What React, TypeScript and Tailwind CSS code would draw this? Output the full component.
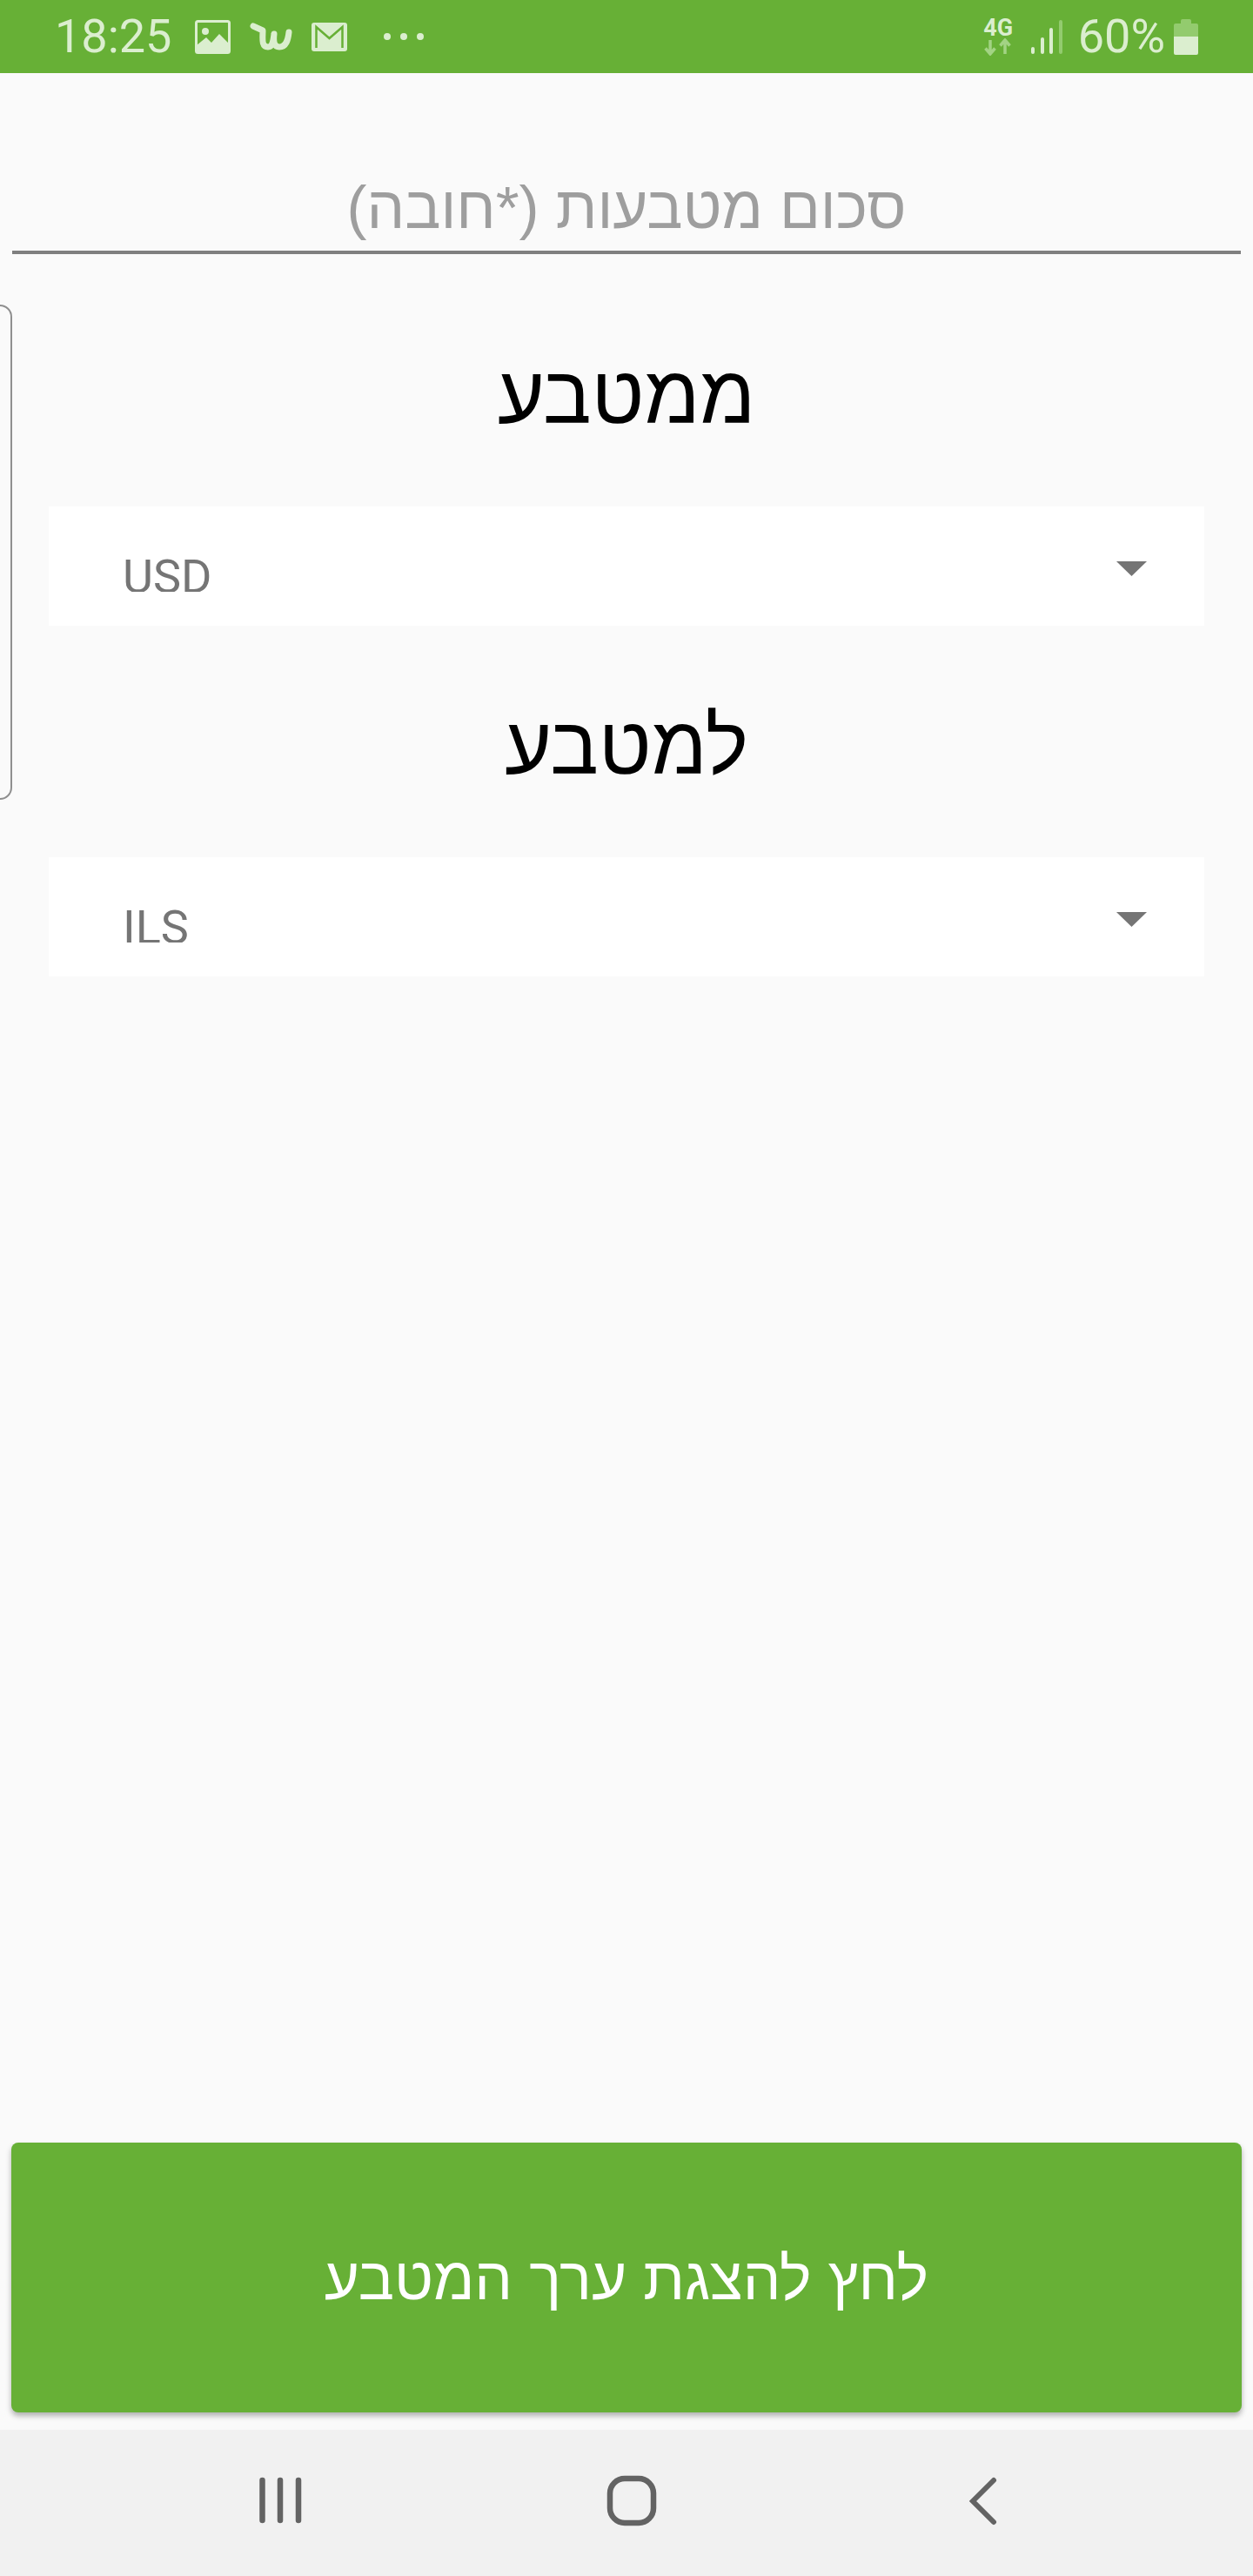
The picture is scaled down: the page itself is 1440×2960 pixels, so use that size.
const heb = "font-['Liberation_Sans',sans-serif]";

function ImageIcon() {
  return (
    <svg width="41" height="39" viewBox="0 0 41 39" className="block">
      <rect x="1.5" y="1.5" width="38" height="36" rx="2" fill="none" stroke="#dbeecf" strokeWidth="3" />
      <path d="M2 37V29L13 20L19 26L28 16L39 27V37Z" fill="#dbeecf" />
      <circle cx="12" cy="13" r="4" fill="#dbeecf" />
    </svg>
  );
}

function WishIcon() {
  return (
    <svg width="49" height="33" viewBox="0 0 49 33" className="block">
      <path d="M4 4L15 9C15 18 13 28 21 28C27 28 27 20 28 13C27 22 28 28 34 28C42 28 44 20 45 11" fill="none" stroke="#dbeecf" strokeWidth="7" strokeLinecap="round" strokeLinejoin="round" />
    </svg>
  );
}

function MailIcon() {
  return (
    <svg width="41" height="33" viewBox="0 0 41 33" className="block">
      <rect width="41" height="33" rx="3" fill="#dbeecf" />
      <path d="M5.5 29V5L20.5 18L35.5 5V29" fill="none" stroke="#67b036" strokeWidth="2.5" />
    </svg>
  );
}

function Dots() {
  return (
    <svg width="46" height="10" viewBox="0 0 46 10" className="block">
      <circle cx="4" cy="5" r="4" fill="#dbeecf" />
      <circle cx="23" cy="5" r="4" fill="#dbeecf" />
      <circle cx="42" cy="5" r="4" fill="#dbeecf" />
    </svg>
  );
}

function Arrows() {
  return (
    <svg width="32" height="20" viewBox="0 0 32 20" className="block">
      <path d="M7 2V17M1.5 11.5L7 18L12.5 11.5" fill="none" stroke="#a3d384" strokeWidth="3.5" />
      <path d="M24 18V2M18.5 8.5L24 2L29.5 8.5" fill="none" stroke="#a3d384" strokeWidth="3.5" />
    </svg>
  );
}

function Signal() {
  return (
    <div className="flex items-end gap-[6.5px] h-[39px]">
      <div className="w-[4px] h-[8px] rounded-full bg-[#dbeecf]" />
      <div className="w-[4px] h-[19px] rounded-full bg-[#dbeecf]" />
      <div className="w-[4px] h-[30px] rounded-full bg-[#dbeecf]" />
      <div className="w-[4px] h-[39px] rounded-full bg-[#93cb6e]" />
    </div>
  );
}

function Battery() {
  return (
    <div className="flex flex-col items-center w-[28px]">
      <div className="w-[12px] h-[5px] rounded-t-[2px] bg-[#93cb6e]" />
      <div className="w-[28px] h-[15px] rounded-t-[2px] bg-[#93cb6e]" />
      <div className="w-[28px] h-[21px] rounded-b-[2px] bg-[#dbeecf]" />
    </div>
  );
}

function Select({ value }: { value: string }) {
  return (
    <div className="mx-[56px] h-[137px] bg-white flex justify-between items-start">
      <div className="ml-[85px] mt-[38px] h-[60px] overflow-hidden font-['Roboto',sans-serif] text-[54px] leading-[86px] text-[#757575]">
        {value}
      </div>
      <svg width="35" height="17" viewBox="0 0 35 17" className="block mr-[66px] mt-[63px]">
        <path d="M0 0H35L17.5 17Z" fill="#757575" />
      </svg>
    </div>
  );
}

function Heading({ children }: { children: string }) {
  return (
    <h2 dir="rtl" className={`${heb} h-[190px] text-center text-black text-[93px] leading-[124px]`}>
      {children}
    </h2>
  );
}

export default function App() {
  return (
    <div className="relative w-[1440px] h-[2960px] overflow-hidden bg-[#fafafa] flex flex-col">
      <header className="h-[84px] shrink-0 bg-[#67b036] flex items-center pl-[63px] pr-[63px] text-[#dbeecf] font-['Roboto',sans-serif]">
        <span className="text-[54px] leading-none font-normal">18:25</span>
        <div className="ml-[27px]"><ImageIcon /></div>
        <div className="ml-[22px]"><WishIcon /></div>
        <div className="ml-[22px]"><MailIcon /></div>
        <div className="ml-[42px]"><Dots /></div>
        <div className="ml-auto flex flex-col items-center w-[32px]">
          <span className="text-[27px] leading-[24px] font-bold">4G</span>
          <Arrows />
        </div>
        <div className="ml-[22px]"><Signal /></div>
        <span className="ml-[18px] text-[54px] leading-none font-normal">60%</span>
        <div className="ml-[10px]"><Battery /></div>
      </header>

      <main className="flex-1 flex flex-col">
        <div className="mx-[14px] mt-[120px] h-[88px] border-b-4 border-[#7f7f7f] text-center">
          <span dir="rtl" className={`${heb} block text-[69px] leading-[70px] text-[#9e9e9e]`}>
            סכום מטבעות (*חובה)
          </span>
        </div>
        <div className="mt-[100px]"><Heading>ממטבע</Heading></div>
        <Select value="USD" />
        <div className="mt-[76px]"><Heading>למטבע</Heading></div>
        <Select value="ILS" />
        <button dir="rtl" className={`${heb} mt-auto mb-[20px] mx-[13px] h-[310px] rounded-[8px] bg-[#67b036] pt-[3px] text-white text-[69px] shadow-[0_4px_6px_rgba(0,0,0,0.3)]`}>
          לחץ להצגת ערך המטבע
        </button>
      </main>

      <nav className="h-[168px] shrink-0 bg-[#f1f1f1] flex items-start">
        <svg width="56" height="56" viewBox="0 0 56 56" className="block ml-[295px] mt-[54px]">
          <path d="M6.5 4V50M27 4V50M48 4V50" stroke="#636363" strokeWidth="6.5" strokeLinecap="round" fill="none" />
        </svg>
        <svg width="60" height="60" viewBox="0 0 60 60" className="block ml-[345px] mt-[52px]">
          <rect x="5" y="4" width="50" height="51" rx="17" stroke="#636363" strokeWidth="6.5" fill="none" />
        </svg>
        <svg width="36" height="56" viewBox="0 0 36 56" className="block ml-[356px] mt-[54px]">
          <path d="M30 4L6 28L30 52" stroke="#636363" strokeWidth="6" strokeLinecap="round" strokeLinejoin="miter" fill="none" />
        </svg>
      </nav>

      <div className="absolute left-[-20px] top-[350px] w-[34px] h-[569px] rounded-[14px] border-2 border-[#8f8f8f]" />
    </div>
  );
}
